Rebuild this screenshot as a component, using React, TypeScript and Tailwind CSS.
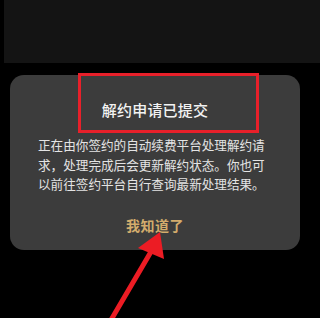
import React from "react";

const CJK = { fontFamily: '"Noto Sans CJK SC", "Noto Sans", sans-serif' };

export default function App() {
  return (
    <div className="relative w-[320px] h-[318px] overflow-hidden bg-black" style={CJK}>
      {/* top status area */}
      <div className="h-[63px] ml-[4px] bg-[#141414]" />

      {/* dialog */}
      <div className="mt-[12px] ml-[10px] w-[290px] h-[175px] rounded-[14px] bg-[#3c3c3c] flex flex-col items-center pt-[24px]">
        <h2 className="text-[15px] leading-[22px] font-medium text-[#f2f2f2] tracking-[0.2px]">
          解约申请已提交
        </h2>
        <p className="mt-[14px] w-[234px] text-[12.6px] leading-[19.5px] text-[#e4e4e4]">
          正在由你签约的自动续费平台处理解约请求，处理完成后会更新解约状态。你也可以前往签约平台自行查询最新处理结果。
        </p>
        <button className="mt-[21px] text-[14px] leading-[20px] font-bold text-[#d3ac6c] tracking-[0.5px]">
          我知道了
        </button>
      </div>

      {/* annotation: red box */}
      <div className="absolute left-[78px] top-[73px] w-[181px] h-[60px] border-[3px] border-[#e8202a]" />

      {/* annotation: arrow */}
      <svg className="absolute left-0 top-0" width="320" height="318" viewBox="0 0 320 318">
        <line x1="111" y1="320" x2="152" y2="250" stroke="#ec1c24" strokeWidth="5" strokeLinecap="round" />
        <polygon points="160,232 138,248 164,259" fill="#ec1c24" />
      </svg>
    </div>
  );
}
